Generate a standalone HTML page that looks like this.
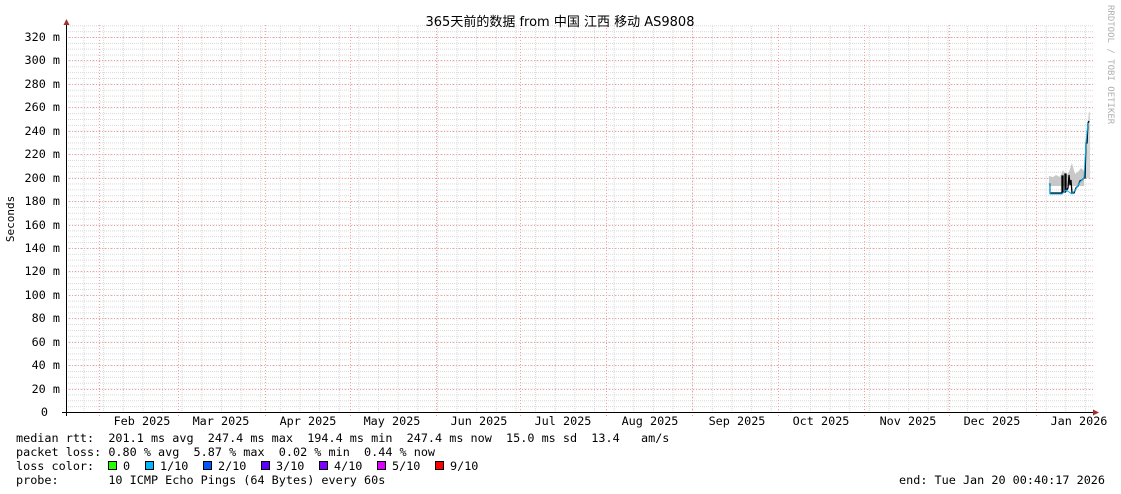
<!DOCTYPE html>
<html><head><meta charset="utf-8"><style>
html,body{margin:0;padding:0;background:#fff;width:1121px;height:494px;overflow:hidden}
svg{display:block}
text{font-family:"DejaVu Sans Mono","Liberation Mono",monospace;font-size:11.8px;fill:#000;white-space:pre}
</style></head><body>
<svg width="1121" height="494" xmlns="http://www.w3.org/2000/svg" shape-rendering="crispEdges">
<defs>
<pattern id="hmin" x="0" y="412" width="10" height="5.8594" patternUnits="userSpaceOnUse">
<line x1="0" y1="0.5" x2="10" y2="0.5" stroke="#d8d8d8" stroke-width="1" stroke-dasharray="1,1"/>
</pattern>
<pattern id="vmin" x="83.5" y="0" width="19.635" height="10" patternUnits="userSpaceOnUse">
<line x1="0.5" y1="0" x2="0.5" y2="10" stroke="#d8d8d8" stroke-width="1" stroke-dasharray="1,1"/>
</pattern>
</defs>
<rect x="66" y="25" width="1027" height="387" fill="url(#hmin)"/>
<rect x="66" y="25" width="1027" height="387" fill="url(#vmin)"/>
<g stroke="#f4a0a0" stroke-width="1" stroke-dasharray="1,2">
<line x1="66" x2="1093" y1="37.5" y2="37.5"/><line x1="66" x2="1093" y1="60.5" y2="60.5"/>
<line x1="66" x2="1093" y1="84.5" y2="84.5"/><line x1="66" x2="1093" y1="107.5" y2="107.5"/>
<line x1="66" x2="1093" y1="131.5" y2="131.5"/><line x1="66" x2="1093" y1="154.5" y2="154.5"/>
<line x1="66" x2="1093" y1="178.5" y2="178.5"/><line x1="66" x2="1093" y1="201.5" y2="201.5"/>
<line x1="66" x2="1093" y1="225.5" y2="225.5"/><line x1="66" x2="1093" y1="248.5" y2="248.5"/>
<line x1="66" x2="1093" y1="271.5" y2="271.5"/><line x1="66" x2="1093" y1="295.5" y2="295.5"/>
<line x1="66" x2="1093" y1="318.5" y2="318.5"/><line x1="66" x2="1093" y1="342.5" y2="342.5"/>
<line x1="66" x2="1093" y1="365.5" y2="365.5"/><line x1="66" x2="1093" y1="389.5" y2="389.5"/>
</g>
<g stroke="#f4a0a0" stroke-width="1" stroke-dasharray="1,2">
<path d="M99.5,25V416M178.5,25V416M265.5,25V416M350.5,25V416M436.5,25V416M520.5,25V416M606.5,25V416M692.5,25V416M778.5,25V416M864.5,25V416M949.5,25V416M1036.5,25V416"/>
</g>
<!-- data -->
<path d="M1049,190 L1049,176 L1053,177 L1056,175 L1060,177 L1063,170 L1066,176 L1069,172 L1072,163 L1075,174 L1078,172 L1081,168 L1084,171 L1084,186 L1049,186Z" fill="#c8c8c8"/>
<path d="M1085,178 L1085,145 L1087,125 L1089,112 L1090,112 L1090,178Z" fill="#d8d8d8"/>
<polyline points="1049,184 1050,184 1050,193 1062,193 1062,176 1063,176 1063,192 1065,192 1065,174 1066,174 1066,191 1068,188 1069,175 1070,185 1071,180 1072,193 1074,193 1076,188 1078,186 1080,181 1082,180 1084,178 1085,178 1086,143 1087,143 1088,123 1089,121" fill="none" stroke="#000" stroke-width="1.3" shape-rendering="auto"/>
<polyline points="1049,184 1050,184 1050,194 1062,194 1066,190 1072,194 1076,189 1080,182 1084,178 1086,143 1088,123" fill="none" stroke="#00b4ff" stroke-width="1" shape-rendering="auto"/>
<!-- axes -->
<line x1="66.5" y1="24" x2="66.5" y2="416" stroke="#000"/>
<line x1="62" y1="412.5" x2="1094" y2="412.5" stroke="#000"/>
<path d="M63.5,25 L69.5,25 L66.5,19Z" fill="#a03030" shape-rendering="auto"/>
<path d="M1093,409.5 L1093,415.5 L1099,412.5Z" fill="#a03030" shape-rendering="auto"/>
<g text-anchor="end" style="font-size:10px">
<text x="60" y="41">320 m</text><text x="60" y="64">300 m</text><text x="60" y="88">280 m</text>
<text x="60" y="111">260 m</text><text x="60" y="135">240 m</text><text x="60" y="158">220 m</text>
<text x="60" y="182">200 m</text><text x="60" y="205">180 m</text><text x="60" y="229">160 m</text>
<text x="60" y="252">140 m</text><text x="60" y="275">120 m</text><text x="60" y="299">100 m</text>
<text x="60" y="322">80 m</text><text x="60" y="346">60 m</text><text x="60" y="369">40 m</text>
<text x="60" y="393">20 m</text><text x="48" y="416">0</text>
</g>
<g text-anchor="middle" style="font-size:10px">
<text x="142" y="425">Feb 2025</text><text x="221" y="425">Mar 2025</text><text x="308" y="425">Apr 2025</text>
<text x="392" y="425">May 2025</text><text x="479" y="425">Jun 2025</text><text x="563" y="425">Jul 2025</text>
<text x="650" y="425">Aug 2025</text><text x="737" y="425">Sep 2025</text><text x="821" y="425">Oct 2025</text>
<text x="908" y="425">Nov 2025</text><text x="992" y="425">Dec 2025</text><text x="1079" y="425">Jan 2026</text>
</g>
<text x="14" y="219" text-anchor="middle" transform="rotate(-90 14 219)" style="font-size:11px">Seconds</text>
<text x="560" y="26" text-anchor="middle" style="font-family:'DejaVu Sans','Noto Sans CJK SC',sans-serif;font-size:13px">365天前的数据 from 中国 江西 移动 AS9808</text>
<text x="1108" y="5" transform="rotate(90 1108 5)" style="font-size:9px;fill:#b0b0b0">RRDTOOL / TOBI OETIKER</text>
<text x="16" y="442">median rtt:  201.1 ms avg  247.4 ms max  194.4 ms min  247.4 ms now  15.0 ms sd  13.4   am/s</text>
<text x="16" y="456">packet loss: 0.80 % avg  5.87 % max  0.02 % min  0.44 % now</text>
<text x="16" y="470">loss color:</text>
<text x="16" y="484">probe:       10 ICMP Echo Pings (64 Bytes) every 60s</text>
<text x="1105" y="484" text-anchor="end">end: Tue Jan 20 00:40:17 2026</text>
<text x="123" y="470">0</text><text x="160" y="470">1/10</text><text x="218" y="470">2/10</text>
<text x="276" y="470">3/10</text><text x="334" y="470">4/10</text><text x="392" y="470">5/10</text><text x="450" y="470">9/10</text>
<g stroke="#000" stroke-width="1">
<rect x="108.5" y="461.5" width="8" height="8" fill="#26ff00"/>
<rect x="145.5" y="461.5" width="8" height="8" fill="#00b8ff"/>
<rect x="203.5" y="461.5" width="8" height="8" fill="#0059ff"/>
<rect x="261.5" y="461.5" width="8" height="8" fill="#5e00ff"/>
<rect x="319.5" y="461.5" width="8" height="8" fill="#7e00ff"/>
<rect x="377.5" y="461.5" width="8" height="8" fill="#dd00ff"/>
<rect x="435.5" y="461.5" width="8" height="8" fill="#ff0000"/>
</g>
</svg>
</body></html>
